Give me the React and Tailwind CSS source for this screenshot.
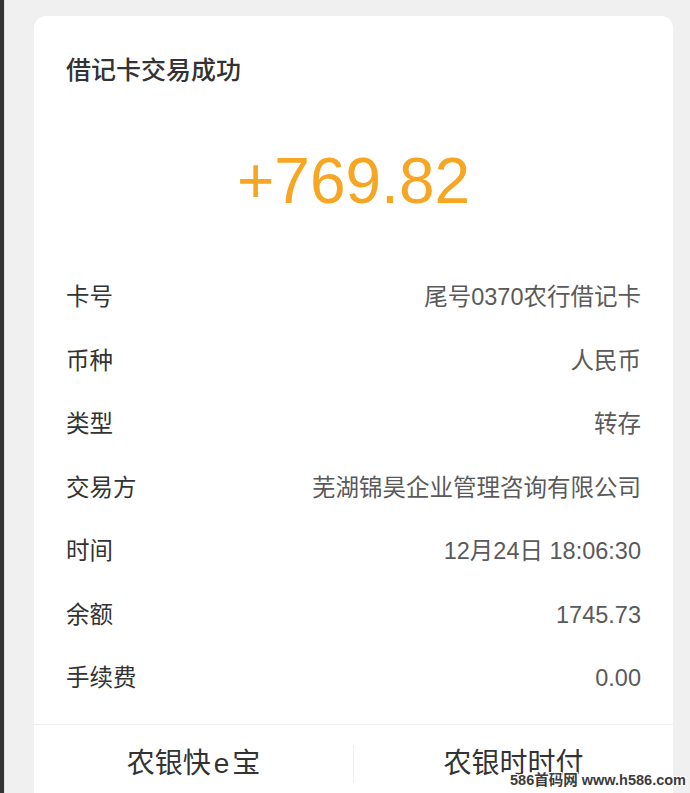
const rows = [
  { label: "卡号", value: "尾号0370农行借记卡" },
  { label: "币种", value: "人民币" },
  { label: "类型", value: "转存" },
  { label: "交易方", value: "芜湖锦昊企业管理咨询有限公司" },
  { label: "时间", value: "12月24日 18:06:30" },
  { label: "余额", value: "1745.73" },
  { label: "手续费", value: "0.00" },
];

const font = {
  fontFamily: '"Liberation Sans", "Noto Sans CJK SC", sans-serif',
};

export default function App() {
  return (
    <div
      className="relative h-[793px] w-[690px] overflow-hidden bg-[#f0f0f0] flex"
      style={font}
    >
      <div className="w-[4px] h-full bg-[#333333] shrink-0" />
      <div className="w-[1px] h-full bg-[#e2e2e2] shrink-0" />
      <div className="flex-1 pl-[29px] pr-[17px] pt-[16px]">
        <div className="bg-white rounded-[12px] h-[820px] flex flex-col">
          <div className="px-[32px] pt-[36px]">
            <h1 className="text-[25px] leading-[36px] font-medium text-[#333333]">
              借记卡交易成功
            </h1>
          </div>

          <div className="mt-[53px] text-center">
            <span className="text-[64px] leading-[80px] text-[#f6a623]">
              +769.82
            </span>
          </div>

          <div className="mt-[45px] px-[32px] pb-[13px]">
            {rows.map((row) => (
              <div
                key={row.label}
                className="h-[63.5px] flex items-center justify-between text-[23.5px]"
              >
                <span className="text-[#333333]">{row.label}</span>
                <span className="text-[#5a5a5a]">{row.value}</span>
              </div>
            ))}
          </div>

          <div className="border-t border-[#f0f0f0] h-[80px] flex items-center">
            <div className="flex-1 text-center text-[28px] text-[#333333]">
              农银快<span className="mx-[3px]">e</span>宝
            </div>
            <div className="w-[1px] h-[38px] bg-[#eeeeee]" />
            <div className="flex-1 text-center text-[28px] text-[#333333]">
              农银时时付
            </div>
          </div>
        </div>
      </div>

      <div
        className="absolute right-[4px] bottom-[3px] text-[14.5px] font-bold text-[#3c3c3c] leading-[20px]"
        style={{
          textShadow:
            "1px 0 #fff, -1px 0 #fff, 0 1px #fff, 0 -1px #fff, 1px 1px #fff, -1px -1px #fff, 1px -1px #fff, -1px 1px #fff",
        }}
      >
        586首码网 www.h586.com
      </div>
    </div>
  );
}
